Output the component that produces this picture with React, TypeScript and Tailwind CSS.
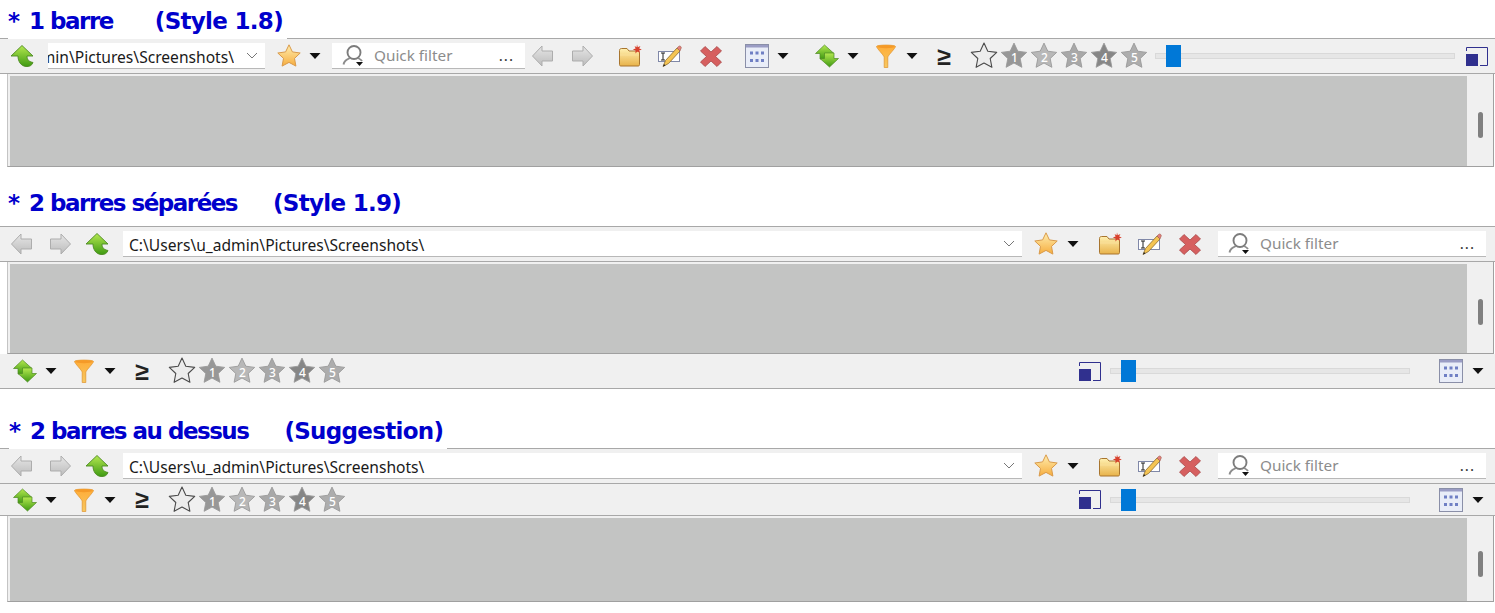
import type { ReactNode } from "react";

const uiFont = "font-['Noto_Sans',sans-serif]";

function starPoints(cx: number, cy: number, R: number, r: number) {
  const pts: string[] = [];
  for (let i = 0; i < 10; i++) {
    const a = ((-90 + 36 * i) * Math.PI) / 180;
    const d = i % 2 === 0 ? R : r;
    pts.push((cx + d * Math.cos(a)).toFixed(1) + "," + (cy + d * Math.sin(a)).toFixed(1));
  }
  return pts.join(" ");
}

function Defs() {
  return (
    <svg className="absolute h-0 w-0" aria-hidden="true">
      <defs>
        <linearGradient id="green" x1="0" y1="0" x2="0" y2="1">
          <stop offset="0" stopColor="#b4e850" />
          <stop offset="1" stopColor="#3f9a12" />
        </linearGradient>
        <linearGradient id="gold" x1="0" y1="0" x2="0" y2="1">
          <stop offset="0" stopColor="#ffeeb0" />
          <stop offset="1" stopColor="#f6ad3e" />
        </linearGradient>
        <linearGradient id="silver" x1="0" y1="0" x2="0" y2="1">
          <stop offset="0" stopColor="#e6e6e6" />
          <stop offset="1" stopColor="#bcbcbc" />
        </linearGradient>
        <linearGradient id="folder" x1="0" y1="0" x2="0" y2="1">
          <stop offset="0" stopColor="#fff0b0" />
          <stop offset="1" stopColor="#e8b24a" />
        </linearGradient>
        <linearGradient id="funnel" x1="0" y1="0" x2="0" y2="1">
          <stop offset="0" stopColor="#ffac38" />
          <stop offset="1" stopColor="#f7c860" />
        </linearGradient>
      </defs>
    </svg>
  );
}

function UpArrow({ className = "" }: { className?: string }) {
  return (
    <svg viewBox="0 0 24 24" className={"h-6 w-6 shrink-0 " + className}>
      <path
        d="M12 1.5 L23 12 H17 C17 15.5 18.5 17.5 23 18.5 C22 21.5 19 23 16 22.5 C11 22 8 17.5 8 12 H1 Z"
        fill="url(#green)"
        stroke="#4d8a22"
        strokeWidth="0.9"
        strokeLinejoin="round"
      />
    </svg>
  );
}

function NavArrow({ right = false, className = "" }: { right?: boolean; className?: string }) {
  return (
    <svg viewBox="0 0 24 24" className={"h-6 w-6 shrink-0 " + className}>
      <path
        d={right ? "M22.5 12 L13 2 V7 H2.5 V17 H13 V22 Z" : "M1.5 12 L11 2 V7 H21.5 V17 H11 V22 Z"}
        fill="url(#silver)"
        stroke="#adadad"
        strokeLinejoin="round"
      />
    </svg>
  );
}

function GoldStar({ className = "" }: { className?: string }) {
  return (
    <svg viewBox="0 0 24 24" className={"h-6 w-6 shrink-0 " + className}>
      <polygon
        points={starPoints(12, 12.6, 11.8, 5.8)}
        fill="url(#gold)"
        stroke="#d99a4a"
        strokeWidth="1"
        strokeLinejoin="round"
      />
    </svg>
  );
}

function Caret({ className = "" }: { className?: string }) {
  return (
    <svg viewBox="0 0 12 6" className={"h-[6px] w-3 shrink-0 " + className}>
      <path d="M0.5 0 H11.5 L6 6 Z" fill="#111" />
    </svg>
  );
}

function FolderNew({ className = "" }: { className?: string }) {
  return (
    <svg viewBox="0 0 24 24" className={"h-6 w-6 shrink-0 " + className}>
      <path
        d="M1.5 6.5 C1.5 5 2.5 4.5 3.5 4.5 H9 L11 7 H20 C21 7 21.5 7.5 21.5 8.5 V20.5 C21.5 21.5 21 22 20 22 H3 C2 22 1.5 21.5 1.5 20.5 Z"
        fill="url(#folder)"
        stroke="#a8752f"
      />
      <path d="M2 11 H21" stroke="#f9e09a" strokeWidth="1" />
      <path
        d="M19 0.5 L19.8 3.2 L22.4 2 L21.2 4.6 L23.8 5.6 L21.2 6.4 L22 9 L19.4 7.6 L17.4 9.4 L17.6 6.6 L14.8 5.6 L17.6 4.6 L16.6 2 L18.6 3.2 Z"
        fill="#d8402c"
      />
    </svg>
  );
}

function EditName({ className = "" }: { className?: string }) {
  return (
    <svg viewBox="0 0 24 24" className={"h-6 w-6 shrink-0 " + className}>
      <rect x="0.5" y="7.5" width="21" height="10" fill="#fff" stroke="#8088a8" />
      <path d="M3 9 H7 M5 9 V16 M3 16 H7" stroke="#222" strokeWidth="1" fill="none" />
      <path d="M5 22.5 L7.5 16.5 L19 4 L22 7 L10.5 19.5 Z" fill="#f4c453" stroke="#8a6a30" strokeWidth="0.8" />
      <path d="M19 4 L20.5 2.5 C21.2 1.8 22 1.8 22.8 2.6 C23.5 3.4 23.4 4.2 22.8 4.9 L22 7 Z" fill="#e2817a" stroke="#a05a50" strokeWidth="0.6" />
      <path d="M5 22.5 L6 20 L7.5 21.5 Z" fill="#222" />
    </svg>
  );
}

function RedX({ className = "" }: { className?: string }) {
  return (
    <svg viewBox="0 0 24 24" className={"h-6 w-6 shrink-0 " + className}>
      <path
        d="M6 2.5 L12 8 L18 2.5 L22.5 7 L16.5 12.5 L22.5 18 L18 22.5 L12 17 L6 22.5 L1.5 18 L7.5 12.5 L1.5 7 Z"
        fill="#d65f5f"
        stroke="#a84848"
        strokeWidth="0.8"
        strokeLinejoin="round"
      />
    </svg>
  );
}

function GridView({ className = "" }: { className?: string }) {
  const dots = [6.5, 12, 17.5];
  return (
    <svg viewBox="0 0 24 24" className={"h-6 w-6 shrink-0 " + className}>
      <rect x="0.5" y="0.5" width="23" height="23" fill="#e9edf8" stroke="#8a8fa8" />
      <rect x="1" y="1" width="22" height="2.5" fill="#9a9cc4" />
      {dots.map((x) =>
        [9, 16.5].map((y) => <rect key={x + "-" + y} x={x - 1.5} y={y - 1.5} width="3" height="3" fill="#6f7fc4" />)
      )}
    </svg>
  );
}

function SyncArrows({ className = "" }: { className?: string }) {
  return (
    <svg viewBox="0 0 24 24" className={"h-6 w-6 shrink-0 " + className}>
      <path d="M9.5 1 L19 9.5 H14.5 V15 H5 V9.5 H0.5 Z" fill="url(#green)" stroke="#4d8a22" strokeWidth="0.7" strokeLinejoin="round" />
      <path d="M14.5 23 L5 14.5 H9.5 V9 H19 V14.5 H23.5 Z" fill="url(#green)" stroke="#4d8a22" strokeWidth="0.7" strokeLinejoin="round" />
    </svg>
  );
}

function Funnel({ className = "" }: { className?: string }) {
  return (
    <svg viewBox="0 0 24 24" className={"h-6 w-6 shrink-0 " + className}>
      <path
        d="M2.5 2.5 C2.5 0.6 21.5 0.6 21.5 2.5 C21.5 4 14.5 11 13.8 13 V23.5 H10.2 V13 C9.5 11 2.5 4 2.5 2.5 Z"
        fill="url(#funnel)"
        stroke="#e0922c"
        strokeWidth="0.7"
      />
      <ellipse cx="12" cy="2.7" rx="8.5" ry="1.5" fill="#f59a28" />
    </svg>
  );
}

function RatingStar({ label, fill = "#ececec" }: { label?: string; fill?: string }) {
  return (
    <svg viewBox="0 0 28 28" className="h-7 w-7 shrink-0">
      <polygon
        points={starPoints(14, 14.5, 13.4, 6.5)}
        fill={fill}
        stroke={label ? "#9a9a9a" : "#4a4a4a"}
        strokeWidth={label ? 0.9 : 1.1}
        strokeLinejoin="round"
      />
      {label && (
        <text x="14.5" y="20" textAnchor="middle" fontSize="12" fontWeight="500" fill="#fff" fontFamily="Noto Sans, sans-serif">
          {label}
        </text>
      )}
    </svg>
  );
}

function SizeIcon({ className = "" }: { className?: string }) {
  return (
    <svg viewBox="0 0 22 19" className={"h-[19px] w-[22px] shrink-0 " + className}>
      <path d="M0.5 4 V0.5 H21.5 V18.5 H14" fill="none" stroke="#30308e" />
      <rect x="0" y="7" width="12" height="12" fill="#30308e" />
    </svg>
  );
}

function Slider({ className = "" }: { className?: string }) {
  return (
    <div className={"relative flex h-[22px] w-[300px] shrink-0 items-center " + className}>
      <div className="h-[6px] w-full border border-[#d9d9d9] bg-[#e6e6e6]" />
      <div className="absolute top-0 left-[11px] h-[22px] w-[15px] bg-[#0078d7]" />
    </div>
  );
}

function PathBox({ className = "", end = false }: { className?: string; end?: boolean }) {
  return (
    <div className={"flex h-[26px] shrink-0 items-center overflow-hidden border-b border-[#b8b8b8] bg-white text-[15.6px] text-[#1a1a1a] " + className}>
      <div className={"flex h-full min-w-0 flex-1 items-center overflow-hidden pt-[4px] whitespace-nowrap " + (end ? "justify-end" : "pl-[6px]")}>
        <span className="shrink-0">C:\Users\u_admin\Pictures\Screenshots\</span>
      </div>
      <svg viewBox="0 0 12 7" className="mr-[7px] ml-[12px] h-[7px] w-3 shrink-0">
        <path d="M1 1 L6 6 L11 1" fill="none" stroke="#777" strokeWidth="1" />
      </svg>
    </div>
  );
}

function QuickFilter({ className = "" }: { className?: string }) {
  return (
    <div className={"flex h-[26px] shrink-0 items-center border-b border-[#b8b8b8] bg-white text-[15.3px] text-[#8c8c8c] " + className}>
      <svg viewBox="0 0 22 22" className="ml-[10px] h-[22px] w-[22px] shrink-0">
        <circle cx="12" cy="7.5" r="6.5" fill="none" stroke="#7c7c7c" strokeWidth="1.9" />
        <path d="M8 13 C4 15 2 16 1.5 19.5 M16 13 C18 14 19 14.5 20 16" fill="none" stroke="#8c8c8c" strokeWidth="1.9" />
        <path d="M14 17 H21 L17.5 21 Z" fill="#111" />
      </svg>
      <span className="ml-[10px]">Quick filter</span>
      <span className="mr-[11px] ml-auto tracking-[1px] text-[#333]">...</span>
    </div>
  );
}

function RatingGroup() {
  return (
    <>
      <span className={"ml-[18px] w-4 shrink-0 pb-[2px] text-center text-[25px] leading-none font-bold text-[#222] " + uiFont}>≥</span>
      <div className="ml-[18px] flex shrink-0 gap-[2px]">
        <RatingStar />
        <RatingStar label="1" fill="#979797" />
        <RatingStar label="2" fill="#b8b8b8" />
        <RatingStar label="3" fill="#a8a8a8" />
        <RatingStar label="4" fill="#868686" />
        <RatingStar label="5" fill="#adadad" />
      </div>
    </>
  );
}

function SortFilter({ className = "" }: { className?: string }) {
  return (
    <>
      <SyncArrows className={className} />
      <Caret className="ml-2" />
      <Funnel className="ml-[15px]" />
      <Caret className="ml-2" />
      <RatingGroup />
    </>
  );
}

function SideTools() {
  return (
    <div className="ml-auto flex items-center pr-[11px]">
      <SizeIcon />
      <Slider className="ml-[9px]" />
      <GridView className="ml-[29px]" />
      <Caret className="ml-[9px]" />
    </div>
  );
}

function Bar({ className = "", children }: { className?: string; children: ReactNode }) {
  return <div className={"flex w-full shrink-0 items-center bg-[#f0f0f0] " + uiFont + " " + className}>{children}</div>;
}

function Browser({ className = "", thumb }: { className?: string; thumb: string }) {
  return (
    <div className={"ml-[7px] flex w-[1487px] shrink-0 border-r border-b border-l border-r-[#a0a0a0] border-b-[#a0a0a0] border-l-[#c4c4c4] bg-[#f0f0f0] pt-[2px] pl-[2px] " + className}>
      <div className="h-full w-[1457px] bg-[#c3c4c3]" />
      <div className={"ml-[11px] h-[26px] w-[5px] rounded-full bg-[#808080] " + thumb} />
    </div>
  );
}

function Heading({ left, right, gap, className = "" }: { left: string; right: string; gap: string; className?: string }) {
  return (
    <div className={"relative flex w-fit shrink-0 items-center bg-white pr-1 text-[23px] leading-none font-bold whitespace-nowrap text-[#0000cc] font-['DejaVu_Sans',sans-serif] " + className}>
      <span className="tracking-[-1.5px]">
        * <span className="ml-[4px]">{left}</span>
      </span>
      <span className={"tracking-[-0.7px] " + gap}>{right}</span>
    </div>
  );
}

function TopBar2() {
  return (
    <Bar className="h-[36px] border-y border-[#a8a8a8]">
      <NavArrow className="ml-[10px]" />
      <NavArrow right className="ml-[14px]" />
      <UpArrow className="ml-[13px]" />
      <PathBox className="ml-[14px] w-[899px]" />
      <GoldStar className="ml-3" />
      <Caret className="ml-[9px]" />
      <FolderNew className="ml-[19px]" />
      <EditName className="ml-[16px]" />
      <RedX className="ml-[16px]" />
      <QuickFilter className="ml-4 w-[268px]" />
    </Bar>
  );
}

export default function App() {
  return (
    <div className="flex h-[613px] w-[1495px] flex-col overflow-hidden bg-white">
      <Defs />

      <Heading left="1 barre" right="(Style 1.8)" gap="ml-[42px]" className="z-10 -mb-px ml-[8px] h-[39px] pt-[3px]" />
      <Bar className="h-[36px] border-y border-[#a8a8a8]">
        <UpArrow className="ml-[10px]" />
        <PathBox end className="ml-[14px] w-[217px]" />
        <GoldStar className="ml-3" />
        <Caret className="ml-2" />
        <QuickFilter className="ml-[11px] w-[193px]" />
        <NavArrow className="ml-[6px]" />
        <NavArrow right className="ml-[15px]" />
        <FolderNew className="ml-[24px]" />
        <EditName className="ml-[16px]" />
        <RedX className="ml-[17px]" />
        <GridView className="ml-[22px]" />
        <Caret className="ml-2" />
        <SortFilter className="ml-[26px]" />
        <Slider className="ml-[7px]" />
        <SizeIcon className="ml-[11px]" />
      </Bar>
      <Browser className="h-[93px]" thumb="mt-[36px]" />

      <Heading left="2 barres séparées" right="(Style 1.9)" gap="ml-[36px]" className="ml-[8px] h-[59px] pt-[13px]" />
      <TopBar2 />
      <Browser className="h-[92px]" thumb="mt-[35px]" />
      <Bar className="h-[35px] border-b border-[#a8a8a8]">
        <SortFilter className="ml-[13px]" />
        <SideTools />
      </Bar>

      <Heading left="2 barres au dessus" right="(Suggestion)" gap="ml-[36px]" className="z-10 -mb-px ml-[9px] h-[60px] pt-[24px]" />
      <TopBar2 />
      <Bar className="h-[32px] border-b border-[#a8a8a8]">
        <SortFilter className="ml-[13px]" />
        <SideTools />
      </Bar>
      <Browser className="h-[86px]" thumb="mt-[33px]" />
    </div>
  );
}
